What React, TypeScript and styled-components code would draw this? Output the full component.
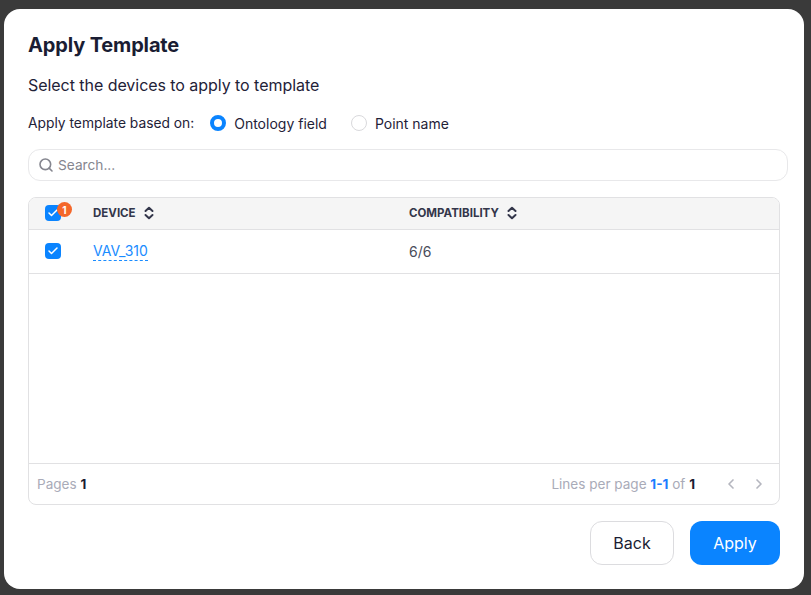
import styled, { createGlobalStyle } from "styled-components";
import { ChevronLeft, ChevronRight, Search, Check } from "lucide-react";

const GlobalStyle = createGlobalStyle`
  html, body { margin: 0; padding: 0; height: 100%; }
  body { background: #3a3a3a; font-family: Inter, "Noto Sans", sans-serif; overflow: hidden; }
`;

const Overlay = styled.div`
  width: 811px;
  height: 595px;
  padding: 9px 7px 6px 4px;
  box-sizing: border-box;
`;
const Modal = styled.div`
  width: 800px;
  height: 580px;
  background: #fff;
  border-radius: 16px;
  padding: 24px 24px 24px;
  box-sizing: border-box;
  display: flex;
  flex-direction: column;
`;
const Title = styled.h2`
  margin: 0;
  font-size: 20px;
  line-height: 24px;
  font-weight: 700;
  letter-spacing: -0.15px;
  color: #1a1d33;
`;
const Subtitle = styled.p`
  margin: 16px 0 0;
  font-size: 16px;
  line-height: 24px;
  letter-spacing: -0.05px;
  color: #1f2238;
`;
const RadioRow = styled.div`
  margin-top: 14px;
  height: 24px;
  display: flex;
  align-items: center;
  font-size: 14px;
  color: #1f2238;
`;
const RadioLabel = styled.span`
  margin-right: 16px;
  font-size: 13.8px;
`;
const RadioOption = styled.label`
  display: flex;
  align-items: center;
  gap: 8px;
  margin-right: 24px;
`;
const RadioDot = styled.span<{ $on?: boolean }>`
  width: 16px;
  height: 16px;
  border-radius: 50%;
  box-sizing: border-box;
  border: ${p => (p.$on ? "4px solid #0a84ff" : "1px solid #d9d9dc")};
  background: #fff;
`;
const SearchBox = styled.div`
  margin: 14px -8px 0 0;
  height: 32px;
  border: 1px solid #e8e8ea;
  border-radius: 12px;
  box-sizing: border-box;
  display: flex;
  align-items: center;
  gap: 4px;
  padding-left: 9px;
  color: #85868f;
  font-size: 13.7px;
`;
const TableCard = styled.div`
  margin-top: 16px;
  height: 308px;
  border: 1px solid #e1e1e3;
  border-radius: 8px;
  box-sizing: border-box;
  display: flex;
  flex-direction: column;
  overflow: hidden;
`;
const Row = styled.div<{ $head?: boolean }>`
  display: grid;
  grid-template-columns: 64px 316px 1fr;
  align-items: center;
  height: ${p => (p.$head ? "32px" : "44px")};
  padding-bottom: 1px;
  flex: none;
  box-sizing: border-box;
  border-bottom: 1px solid #e1e1e3;
  background: ${p => (p.$head ? "#f5f5f5" : "#fff")};
`;
const CheckCell = styled.div`
  display: flex;
  padding-left: 16px;
`;
const CheckBox = styled.span`
  position: relative;
  width: 16px;
  height: 16px;
  border-radius: 4px;
  background: #0a84ff;
  color: #fff;
  display: flex;
  align-items: center;
  justify-content: center;
`;
const Badge = styled.span`
  position: absolute;
  top: -3px;
  left: 12px;
  width: 15px;
  height: 15px;
  border-radius: 50%;
  background: #f4672a;
  color: #fff;
  font-size: 10px;
  font-weight: 700;
  display: flex;
  align-items: center;
  justify-content: center;
`;
const HeadCell = styled.div`
  display: flex;
  align-items: center;
  gap: 7px;
  font-size: 11.5px;
  font-weight: 700;
  color: #33364a;
`;
const DeviceLink = styled.a`
  justify-self: start;
  font-size: 14px;
  line-height: 18px;
  color: #1a8cff;
  border-bottom: 1px dashed #1a8cff;
`;
const Cell = styled.div`
  font-size: 14px;
  color: #4a4c5a;
`;
const Spacer = styled.div`
  flex: 1;
`;
const Footer = styled.div`
  height: 41px;
  flex: none;
  border-top: 1px solid #e1e1e3;
  box-sizing: border-box;
  display: flex;
  align-items: center;
  justify-content: space-between;
  padding: 0 12px 0 8px;
  font-size: 13.55px;
  color: #a9abb8;
`;
const Strong = styled.b<{ $blue?: boolean }>`
  font-weight: 700;
  color: ${p => (p.$blue ? "#1a7dff" : "#1a1d33")};
`;
const Pager = styled.div`
  display: flex;
  align-items: center;
`;
const PagerArrows = styled.div`
  display: flex;
  gap: 12px;
  margin-left: 28px;
  color: #b5b6bf;
`;
const Actions = styled.div`
  margin-top: 16px;
  display: flex;
  justify-content: flex-end;
  gap: 16px;
`;
const Button = styled.button<{ $primary?: boolean }>`
  height: 44px;
  width: ${p => (p.$primary ? "90px" : "84px")};
  border-radius: 12px;
  font-family: inherit;
  font-size: 16px;
  box-sizing: border-box;
  border: ${p => (p.$primary ? "none" : "1px solid #dcdcdf")};
  background: ${p => (p.$primary ? "#0a84ff" : "#fff")};
  color: ${p => (p.$primary ? "#fff" : "#1a1d33")};
`;

function SortIcon() {
  return (
    <svg width="12" height="14" viewBox="0 0 12 14" fill="none" stroke="#33364a" strokeWidth="2" strokeLinecap="round" strokeLinejoin="round">
      <path d="M2.5 5L6 1.8L9.5 5" />
      <path d="M2.5 9L6 12.2L9.5 9" />
    </svg>
  );
}

function App() {
  return (
    <Overlay>
      <GlobalStyle />
      <Modal>
        <Title>Apply Template</Title>
        <Subtitle>Select the devices to apply to template</Subtitle>
        <RadioRow>
          <RadioLabel>Apply template based on:</RadioLabel>
          <RadioOption><RadioDot $on />Ontology field</RadioOption>
          <RadioOption><RadioDot />Point name</RadioOption>
        </RadioRow>
        <SearchBox>
          <Search size={16} strokeWidth={2.4} />
          Search...
        </SearchBox>
        <TableCard>
          <Row $head>
            <CheckCell>
              <CheckBox>
                <Check size={12} strokeWidth={3} />
                <Badge>1</Badge>
              </CheckBox>
            </CheckCell>
            <HeadCell>DEVICE <SortIcon /></HeadCell>
            <HeadCell>COMPATIBILITY <SortIcon /></HeadCell>
          </Row>
          <Row>
            <CheckCell>
              <CheckBox><Check size={12} strokeWidth={3} /></CheckBox>
            </CheckCell>
            <DeviceLink>VAV_310</DeviceLink>
            <Cell>6/6</Cell>
          </Row>
          <Spacer />
          <Footer>
            <span>Pages <Strong>1</Strong></span>
            <Pager>
              <span>Lines per page <Strong $blue>1-1</Strong> of <Strong>1</Strong></span>
              <PagerArrows>
                <ChevronLeft size={16} strokeWidth={2.5} />
                <ChevronRight size={16} strokeWidth={2.5} />
              </PagerArrows>
            </Pager>
          </Footer>
        </TableCard>
        <Actions>
          <Button>Back</Button>
          <Button $primary>Apply</Button>
        </Actions>
      </Modal>
    </Overlay>
  );
}

export default App;
